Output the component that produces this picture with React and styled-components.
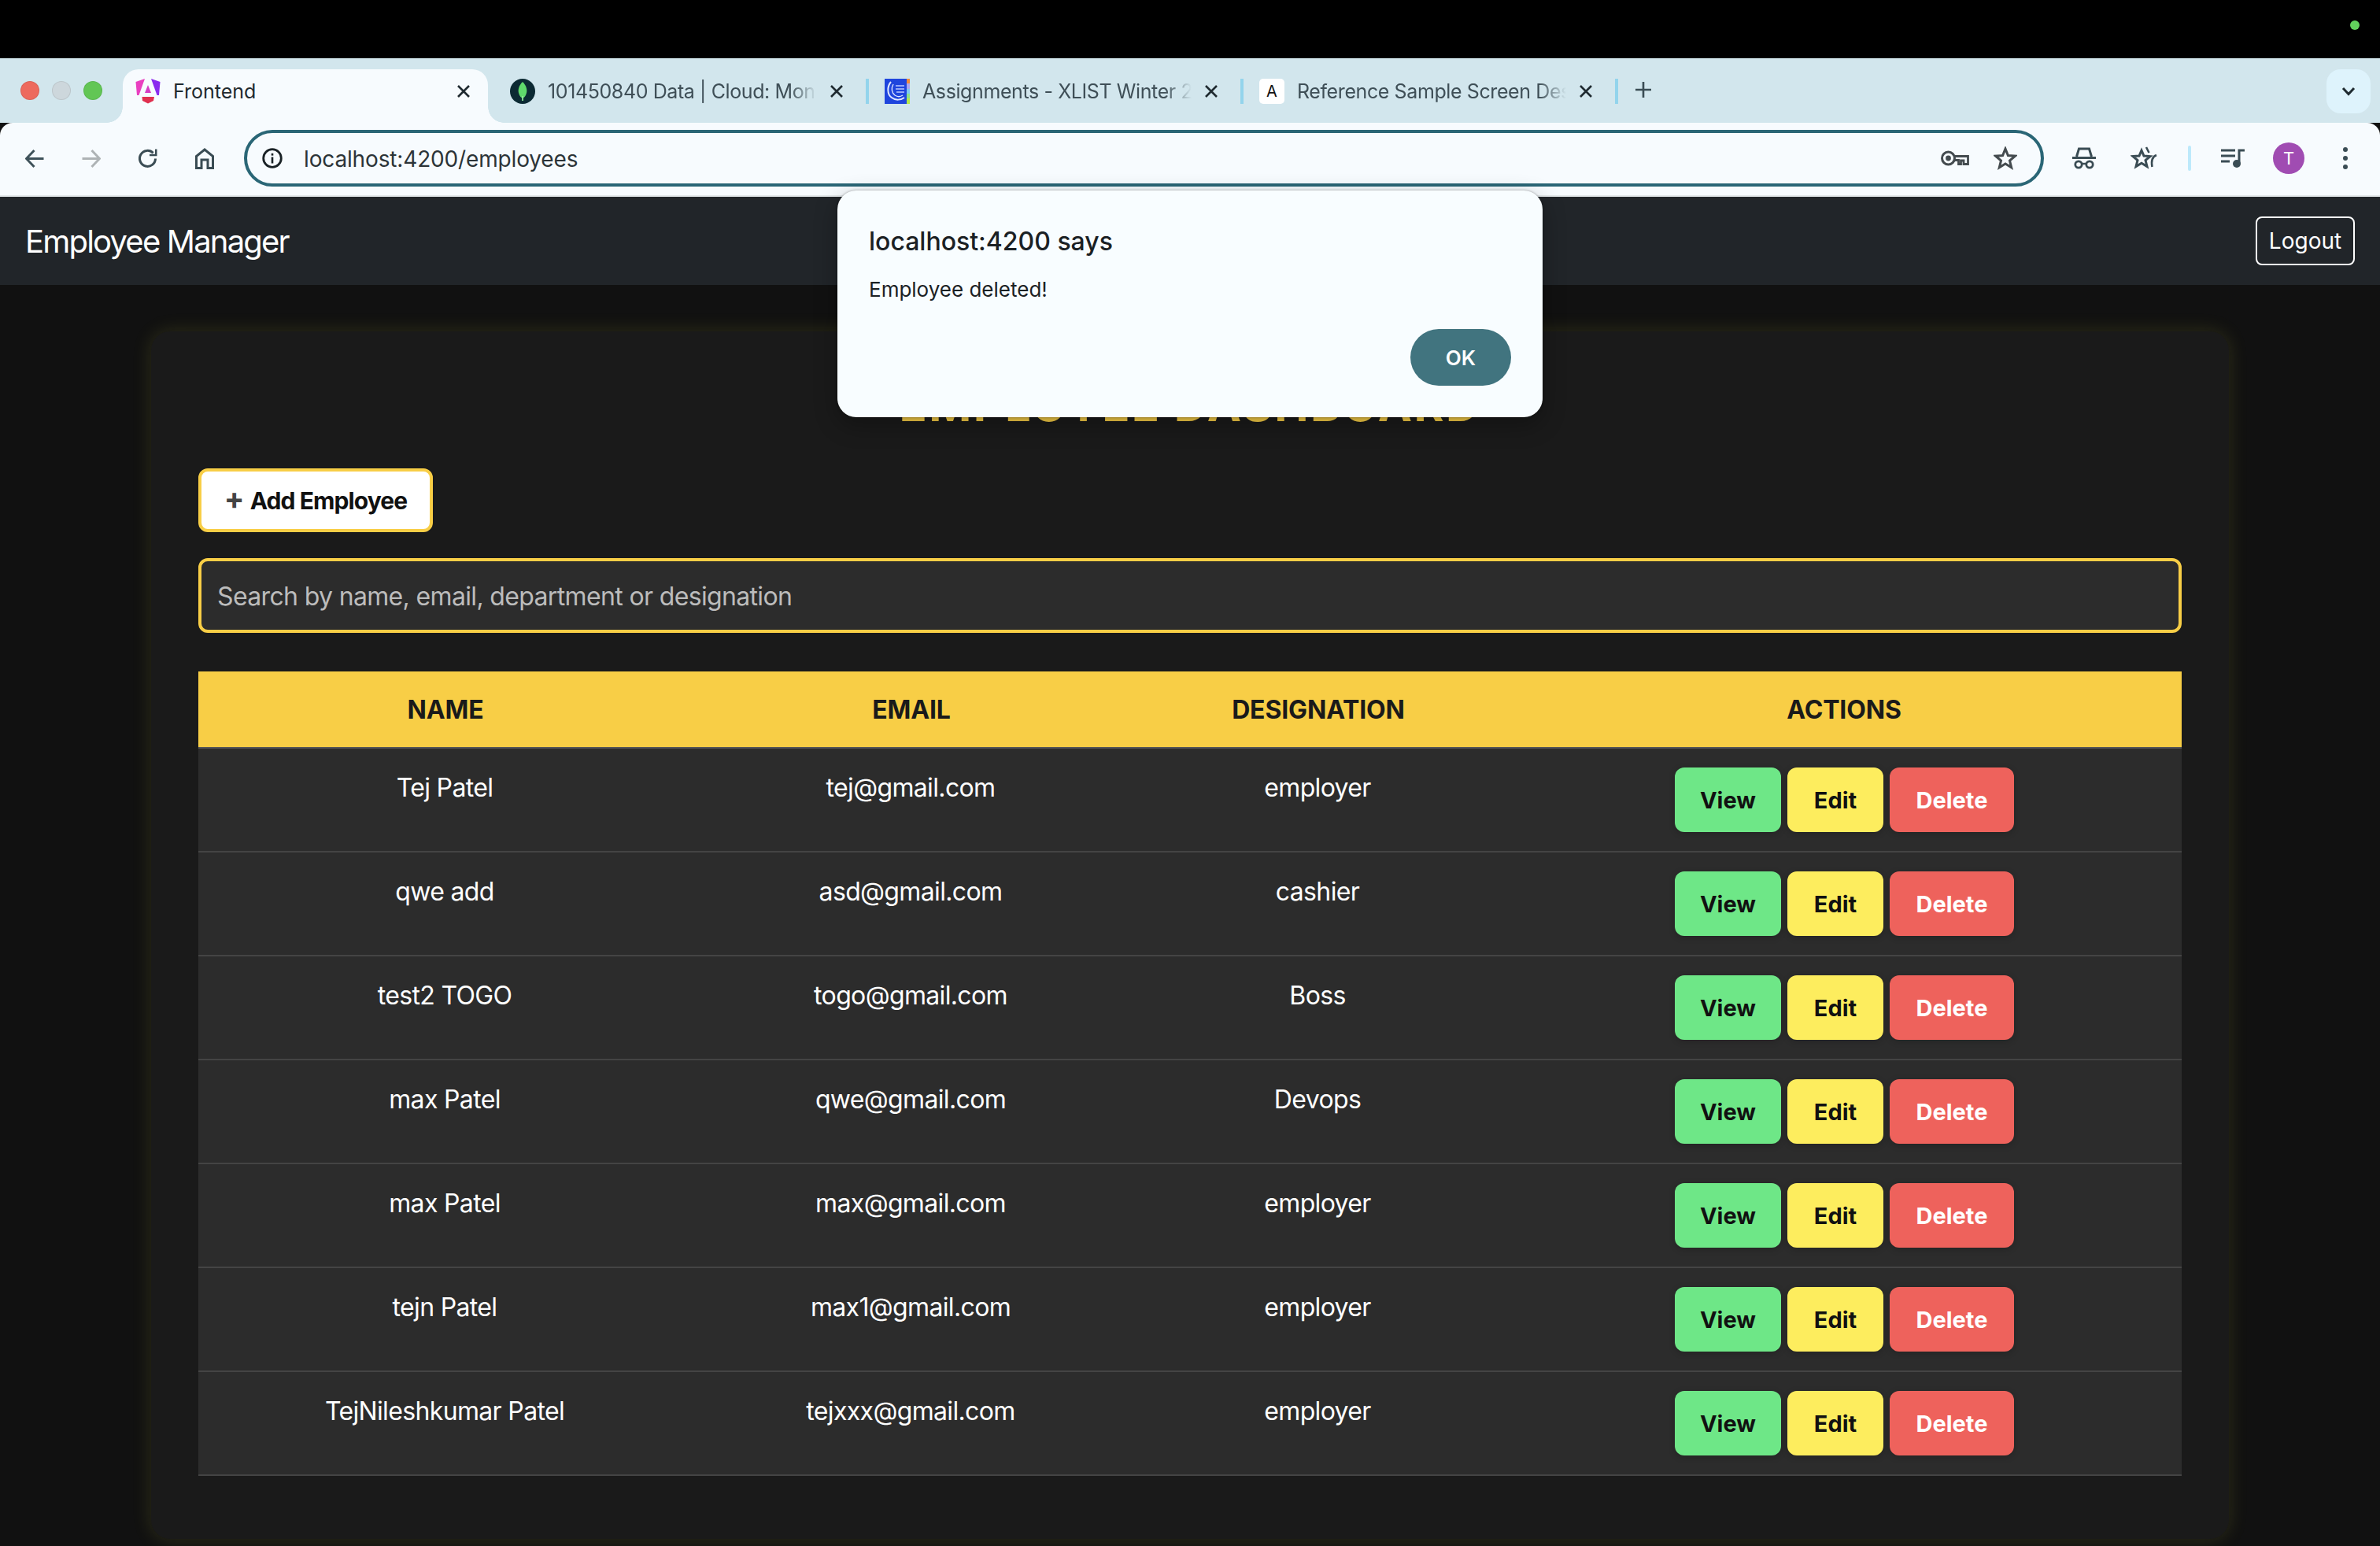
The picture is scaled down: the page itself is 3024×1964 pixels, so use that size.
import React from "react";
import styled, { createGlobalStyle } from "styled-components";

const GlobalStyle = createGlobalStyle`
  html, body {
    margin: 0;
    padding: 0;
    background: #111111;
    font-family: Inter, "Liberation Sans", sans-serif;
  }
  * { box-sizing: border-box; }
`;

const employees = [
  ["Tej Patel", "tej@gmail.com", "employer"],
  ["qwe add", "asd@gmail.com", "cashier"],
  ["test2 TOGO", "togo@gmail.com", "Boss"],
  ["max Patel", "qwe@gmail.com", "Devops"],
  ["max Patel", "max@gmail.com", "employer"],
  ["tejn Patel", "max1@gmail.com", "employer"],
  ["TejNileshkumar Patel", "tejxxx@gmail.com", "employer"],
];

const CloseIcon = () => (
  <CloseSvg viewBox="0 0 18 18">
    <path d="M2 2 L16 16 M16 2 L2 16" stroke="#1f2a30" strokeWidth="2.6" fill="none" />
  </CloseSvg>
);

const AngularIcon = () => (
  <Favicon viewBox="0 0 32 32">
    <path d="M12 0 L0.5 4 L2 21 L4.5 21 Z" fill="#e93fc0" />
    <path d="M20 0 L31.5 4 L30 21 L27.5 21 Z" fill="#8a2bee" />
    <path d="M16 8 L20 18 L12 18 Z" fill="#d63cc4" />
    <path d="M8.5 23 H24 L23 28 L16 31.5 L9 28 Z" fill="#e0304f" />
  </Favicon>
);

const MongoIcon = () => (
  <Favicon viewBox="0 0 32 32">
    <circle cx="16" cy="16" r="16" fill="#0c2a33" />
    <path d="M16 4 C21 9 22 14 21 18 C20 22 18 24 16 25 C14 24 12 22 11 18 C10 14 11 9 16 4 Z" fill="#5fd86b" />
    <rect x="15.2" y="22" width="1.8" height="6" fill="#8fe79a" />
  </Favicon>
);

const CollegeIcon = () => (
  <Favicon viewBox="0 0 32 32">
    <rect width="28" height="32" fill="#1f45dd" />
    <rect x="28" width="4" height="6" fill="#f08a3c" />
    <rect x="28" y="6" width="4" height="7" fill="#a9a6ee" />
    <rect x="28" y="13" width="4" height="6" fill="#7cc8f0" />
    <rect x="28" y="19" width="4" height="6" fill="#8ae08a" />
    <rect x="28" y="25" width="4" height="7" fill="#b6e84a" />
    <path d="M8 4 C3 10 3 20 9 24 C14 28 21 27 25 24" stroke="#dfe6ff" strokeWidth="2" fill="none" />
    <path d="M11 7 C8 12 9 18 13 21 C16 23 20 23 23 21" stroke="#dfe6ff" strokeWidth="1.4" fill="none" />
    <path d="M14 9 H25 M14 13 H25 M15 17 H25" stroke="#bcc9ff" strokeWidth="1.6" fill="none" />
  </Favicon>
);

const BackIcon = () => (
  <NavSvg viewBox="0 0 24 24">
    <path d="M23.5 12 H2 M11.5 1.5 L1.5 12 L11.5 22.5" stroke="#3f525a" strokeWidth="3" fill="none" />
  </NavSvg>
);

const ForwardIcon = () => (
  <NavSvg viewBox="0 0 24 24">
    <path d="M0.5 12 H22 M12.5 1.5 L22.5 12 L12.5 22.5" stroke="#aeb3b5" strokeWidth="3" fill="none" />
  </NavSvg>
);

const ReloadIcon = () => (
  <NavSvg viewBox="0 0 24 24">
    <path d="M21.5 12 A10 10 0 1 1 18.6 4.8" stroke="#3a4c54" strokeWidth="3" fill="none" />
    <path d="M14 8.8 H23.5 V0 H21 V6.3 H14 Z" fill="#3a4c54" />
  </NavSvg>
);

const HomeIcon = () => (
  <NavSvg viewBox="0 0 24 27">
    <path d="M1.5 25.5 V10.5 L12 2 L22.5 10.5 V25.5 H16 V15 H8 V25.5 Z" stroke="#3a4c54" strokeWidth="3" fill="none" />
  </NavSvg>
);

const InfoIcon = () => (
  <InfoSvg viewBox="0 0 26 26">
    <circle cx="13" cy="13" r="11.3" stroke="#1a2226" strokeWidth="2.8" fill="none" />
    <rect x="11.7" y="11.5" width="2.6" height="8" fill="#1a2226" />
    <rect x="11.7" y="6.8" width="2.6" height="2.8" fill="#1a2226" />
  </InfoSvg>
);

const KeyIcon = () => (
  <KeySvg viewBox="0 0 36 20">
    <circle cx="9.5" cy="10" r="8" stroke="#444b4f" strokeWidth="3" fill="none" />
    <circle cx="9.5" cy="10" r="3.4" fill="#444b4f" />
    <path d="M17.5 7.5 H34.5 V17.5 H29 V13 H25.5 V17.5 H22.5 V12.5 H17.5" stroke="#444b4f" strokeWidth="2.8" fill="none" />
  </KeySvg>
);

const StarIcon = () => (
  <StarSvg viewBox="0 0 30 30">
    <path d="M15 3 L18.4 11.6 L27.4 12.2 L20.5 18 L22.7 26.8 L15 22 L7.3 26.8 L9.5 18 L2.6 12.2 L11.6 11.6 Z" stroke="#444b4f" strokeWidth="3" fill="none" />
  </StarSvg>
);

const HatIcon = () => (
  <HatSvg viewBox="0 0 30 28">
    <path d="M0 13.5 H30" stroke="#3a4c54" strokeWidth="3" />
    <path d="M5.5 12 L8.5 2 H21.5 L24.5 12" stroke="#3a4c54" strokeWidth="3" fill="none" />
    <circle cx="8" cy="22" r="4.2" stroke="#3a4c54" strokeWidth="2.8" fill="none" />
    <circle cx="22" cy="22" r="4.2" stroke="#3a4c54" strokeWidth="2.8" fill="none" />
    <path d="M12 21 H18" stroke="#3a4c54" strokeWidth="2.4" />
  </HatSvg>
);

const SparkStarIcon = () => (
  <SparkSvg viewBox="0 0 34 30">
    <path d="M14 5 L17 12 L25 12.6 L19 17.6 L21 25.5 L14 21.2 L7 25.5 L9 17.6 L3 12.6 L11 12 Z" stroke="#3a4c54" strokeWidth="3" fill="none" />
    <path d="M20 1 L23.5 8 M33 11 C28 13 26 18 27.5 26" stroke="#3a4c54" strokeWidth="2.6" fill="none" />
  </SparkSvg>
);

const MediaIcon = () => (
  <MediaSvg viewBox="0 0 30 24">
    <path d="M0 2 H18 M0 9 H18 M0 16 H11" stroke="#3a4c54" strokeWidth="3" />
    <path d="M23 19 V2 H30" stroke="#3a4c54" strokeWidth="3" fill="none" />
    <circle cx="20" cy="19" r="5" fill="#3a4c54" />
  </MediaSvg>
);

const App = () => {
  return (
    <>
      <GlobalStyle />
      <Page>
        <MenuBar>
          <StatusDot />
        </MenuBar>

        <TabStrip>
          <WindowButtons>
            <Light $color="#ed6a5e" />
            <Light $color="#cdd7dc" />
            <Light $color="#62c655" />
          </WindowButtons>
          <ActiveTab>
            <AngularIcon />
            <ActiveTitle>Frontend</ActiveTitle>
            <CloseIcon />
          </ActiveTab>
          <Tab>
            <MongoIcon />
            <TabTitle>101450840 Data | Cloud: Mon</TabTitle>
            <CloseIcon />
          </Tab>
          <Tab>
            <CollegeIcon />
            <TabTitle>Assignments - XLIST Winter 2</TabTitle>
            <CloseIcon />
          </Tab>
          <Tab>
            <LetterFavicon>A</LetterFavicon>
            <TabTitle>Reference Sample Screen Des</TabTitle>
            <CloseIcon />
          </Tab>
          <NewTab viewBox="0 0 20 20">
            <path d="M10 0 V20 M0 10 H20" stroke="#3a4c54" strokeWidth="2.6" />
          </NewTab>
          <TabSearch>
            <svg width="18" height="12" viewBox="0 0 18 12">
              <path d="M2 2 L9 9.5 L16 2" stroke="#1f2a30" strokeWidth="3" fill="none" />
            </svg>
          </TabSearch>
        </TabStrip>

        <Toolbar>
          <NavSlot><BackIcon /></NavSlot>
          <NavSlot><ForwardIcon /></NavSlot>
          <NavSlot><ReloadIcon /></NavSlot>
          <NavSlot><HomeIcon /></NavSlot>
          <AddressBar>
            <InfoIcon />
            <Url>localhost:4200/employees</Url>
            <KeyIcon />
            <StarIcon />
          </AddressBar>
          <ToolSlot $width={76}><HatIcon /></ToolSlot>
          <ToolSlot $width={76}><SparkStarIcon /></ToolSlot>
          <ToolSlot $width={40}><ToolDivider /></ToolSlot>
          <ToolSlot $width={70}><MediaIcon /></ToolSlot>
          <ToolSlot $width={72}><Avatar>T</Avatar></ToolSlot>
          <ToolSlot $width={72}>
            <Kebab>
              <i /><i /><i />
            </Kebab>
          </ToolSlot>
        </Toolbar>

        <Navbar>
          <Brand>Employee Manager</Brand>
          <LogoutButton>Logout</LogoutButton>
        </Navbar>

        <Main>
          <Card>
            <Heading>EMPLOYEE DASHBOARD</Heading>
            <AddButton>
              <PlusSign>+</PlusSign>
              Add Employee
            </AddButton>
            <SearchInput placeholder="Search by name, email, department or designation" />
            <Table>
              <colgroup>
                <col style={{ width: "626px" }} />
                <col style={{ width: "558px" }} />
                <col style={{ width: "476px" }} />
                <col style={{ width: "860px" }} />
              </colgroup>
              <thead>
                <tr>
                  <HeadCell>NAME</HeadCell>
                  <HeadCell>EMAIL</HeadCell>
                  <HeadCell>DESIGNATION</HeadCell>
                  <HeadCell>ACTIONS</HeadCell>
                </tr>
              </thead>
              <tbody>
                {employees.map(([name, email, role], i) => (
                  <tr key={i}>
                    <Cell>{name}</Cell>
                    <Cell>{email}</Cell>
                    <Cell>{role}</Cell>
                    <Cell>
                      <Actions>
                        <ActionButton $bg="#6ee787" $width={135}>View</ActionButton>
                        <ActionButton $bg="#fded5e" $width={122}>Edit</ActionButton>
                        <ActionButton $bg="#ee625c" $fg="#ffffff" $width={158}>Delete</ActionButton>
                      </Actions>
                    </Cell>
                  </tr>
                ))}
              </tbody>
            </Table>
          </Card>
        </Main>

        <Dialog>
          <DialogTitle>localhost:4200 says</DialogTitle>
          <DialogMessage>Employee deleted!</DialogMessage>
          <DialogFooter>
            <OkButton>OK</OkButton>
          </DialogFooter>
        </Dialog>
      </Page>
    </>
  );
};

export default App;

const Page = styled.div`
  position: relative;
  width: 3024px;
  height: 1964px;
  overflow: hidden;
  background: #111111;
`;

const MenuBar = styled.div`
  height: 74px;
  background: #000000;
  display: flex;
  justify-content: flex-end;
  padding: 26px 26px 0 0;
`;

const StatusDot = styled.div`
  width: 12px;
  height: 12px;
  border-radius: 50%;
  background: #62d25c;
`;

const TabStrip = styled.div`
  height: 82px;
  background: #d2e6ed;
  display: flex;
  align-items: flex-start;
  padding-top: 14px;
`;

const WindowButtons = styled.div`
  width: 156px;
  height: 54px;
  padding-left: 26px;
  display: flex;
  align-items: center;
  gap: 16px;
`;

const Light = styled.div`
  width: 24px;
  height: 24px;
  border-radius: 50%;
  background: ${(p) => p.$color};
  border: 1px solid rgba(0, 0, 0, 0.08);
`;

const ActiveTab = styled.div`
  position: relative;
  width: 464px;
  height: 68px;
  margin-right: 8px;
  padding: 12px 22px 24px 16px;
  display: flex;
  background: #f7fbfe;
  border-radius: 20px 20px 0 0;

  &::before,
  &::after {
    content: "";
    position: absolute;
    bottom: 0;
    width: 20px;
    height: 20px;
  }
  &::before {
    left: -20px;
    background: radial-gradient(circle at 0 0, transparent 19.5px, #f7fbfe 20px);
  }
  &::after {
    right: -20px;
    background: radial-gradient(circle at 100% 0, transparent 19.5px, #f7fbfe 20px);
  }
`;

const Tab = styled.div`
  width: 476px;
  height: 32px;
  margin-top: 12px;
  padding: 0 28px 0 20px;
  display: flex;
  border-right: 4px solid #93d4ec;
`;

const Favicon = styled.svg`
  width: 32px;
  height: 32px;
  flex: none;
`;

const LetterFavicon = styled.div`
  width: 32px;
  height: 32px;
  flex: none;
  background: #ffffff;
  border-radius: 5px;
  color: #111111;
  font-size: 20px;
  line-height: 32px;
  text-align: center;
`;

const ActiveTitle = styled.div`
  flex: 1;
  margin-left: 16px;
  font-size: 25px;
  line-height: 32px;
  color: #1f2a30;
  white-space: nowrap;
`;

const TabTitle = styled.div`
  flex: 1;
  min-width: 0;
  margin: 0 16px 0 16px;
  font-size: 25px;
  line-height: 32px;
  letter-spacing: -0.4px;
  color: #3f4f57;
  white-space: nowrap;
  mask-image: linear-gradient(to right, #000 90%, transparent 100%);
`;

const CloseSvg = styled.svg`
  width: 18px;
  height: 18px;
  flex: none;
  align-self: center;
`;

const NewTab = styled.svg`
  width: 20px;
  height: 20px;
  margin: 16px 0 0 22px;
`;

const TabSearch = styled.div`
  margin-left: auto;
  margin-right: 12px;
  width: 56px;
  height: 56px;
  border-radius: 18px;
  background: #def3fc;
  display: flex;
  align-items: center;
  justify-content: center;
`;

const Toolbar = styled.div`
  position: relative;
  height: 94px;
  padding: 10px 8px 12px 8px;
  background: #f7fbfe;
  border-bottom: 2px solid #e3e8ea;
  border-radius: 16px 16px 0 0;
  display: flex;
  align-items: center;
`;

const NavSlot = styled.div`
  width: 72px;
  height: 72px;
  flex: none;
  display: flex;
  align-items: center;
  justify-content: center;
`;

const NavSvg = styled.svg`
  width: 24px;
  height: 27px;
`;

const ToolSlot = styled.div`
  width: ${(p) => p.$width}px;
  height: 72px;
  flex: none;
  display: flex;
  align-items: center;
  justify-content: center;
`;

const AddressBar = styled.div`
  flex: 1;
  height: 72px;
  margin: 0 13px 0 14px;
  padding: 0 30px 0 19px;
  border: 4px solid #2a6676;
  border-radius: 36px;
  display: flex;
  align-items: center;
`;

const InfoSvg = styled.svg`
  width: 26px;
  height: 26px;
  flex: none;
`;

const Url = styled.div`
  flex: 1;
  margin-left: 27px;
  padding-top: 2px;
  font-size: 28px;
  letter-spacing: -0.15px;
  color: #2c3438;
  white-space: nowrap;
`;

const KeySvg = styled.svg`
  width: 36px;
  height: 20px;
  flex: none;
`;

const StarSvg = styled.svg`
  width: 30px;
  height: 30px;
  margin-left: 31px;
  flex: none;
`;

const HatSvg = styled.svg`
  width: 30px;
  height: 28px;
`;

const SparkSvg = styled.svg`
  width: 34px;
  height: 30px;
`;

const ToolDivider = styled.div`
  width: 4px;
  height: 32px;
  border-radius: 2px;
  background: #bde9fb;
`;

const MediaSvg = styled.svg`
  width: 30px;
  height: 24px;
`;

const Avatar = styled.div`
  width: 40px;
  height: 40px;
  border-radius: 50%;
  background: #a04cb2;
  color: #ffffff;
  font-size: 22px;
  line-height: 40px;
  text-align: center;
`;

const Kebab = styled.div`
  display: flex;
  flex-direction: column;
  gap: 5px;

  i {
    display: block;
    width: 6px;
    height: 6px;
    border-radius: 50%;
    background: #3a4c54;
  }
`;

const Navbar = styled.div`
  height: 112px;
  padding: 0 32px;
  background: #212529;
  display: flex;
  align-items: center;
  justify-content: space-between;
`;

const Brand = styled.div`
  font-size: 40px;
  color: #ffffff;
  letter-spacing: -1.8px;
`;

const LogoutButton = styled.button`
  width: 126px;
  height: 62px;
  padding: 0;
  background: transparent;
  border: 2px solid #ffffff;
  border-radius: 8px;
  color: #ffffff;
  font-family: inherit;
  font-size: 28px;
`;

const Main = styled.div`
  padding: 59px 192px 0;
`;

const Card = styled.div`
  height: 1534px;
  padding: 57px 60px 0;
  background: #1a1a1a;
  border-radius: 24px;
  box-shadow: 0 0 24px rgba(200, 200, 60, 0.16);
`;

const Heading = styled.h1`
  margin: 0 0 45px;
  font-size: 58px;
  line-height: 72px;
  font-weight: 700;
  letter-spacing: 2.5px;
  text-align: center;
  color: #f8ce46;
`;

const AddButton = styled.button`
  display: block;
  width: 298px;
  height: 81px;
  padding: 0 0 3px;
  background: #ffffff;
  border: 4px solid #f8ce46;
  border-radius: 12px;
  color: #111111;
  font-family: inherit;
  font-size: 30px;
  font-weight: 700;
  letter-spacing: -0.9px;
`;

const PlusSign = styled.span`
  margin-right: 8px;
  font-size: 38px;
  line-height: 1;
  font-weight: 700;
  color: #444444;
`;

const SearchInput = styled.input`
  display: block;
  width: 100%;
  height: 95px;
  margin: 33px 0 49px;
  padding: 2px 20px 0;
  background: #2c2c2c;
  border: 4px solid #f8ce46;
  border-radius: 12px;
  color: #ffffff;
  font-family: inherit;
  font-size: 32px;
  letter-spacing: -0.65px;
  outline: none;

  &::placeholder {
    color: #bcbcbc;
    opacity: 1;
  }
`;

const Table = styled.table`
  width: 100%;
  table-layout: fixed;
  border-collapse: separate;
  border-spacing: 0;
`;

const HeadCell = styled.th`
  height: 98px;
  padding: 0 0 0 2px;
  background: #f8ce46;
  border-bottom: 2px solid #555555;
  color: #1a1a1a;
  font-size: 32px;
  font-weight: 700;
  letter-spacing: -0.15px;
  text-align: center;
`;

const Cell = styled.td`
  padding: 24px;
  background: #2c2c2c;
  border-bottom: 2px solid #444444;
  color: #ffffff;
  font-size: 32px;
  line-height: 52px;
  letter-spacing: -0.65px;
  text-align: center;
  vertical-align: top;
`;

const Actions = styled.div`
  display: flex;
  justify-content: center;
  gap: 8px;
  padding-left: 3px;
`;

const ActionButton = styled.button`
  width: ${(p) => p.$width}px;
  height: 82px;
  padding: 0;
  background: ${(p) => p.$bg};
  border: none;
  border-radius: 12px;
  box-shadow: 0 2px 8px rgba(0, 0, 0, 0.2);
  color: ${(p) => p.$fg || "#111111"};
  font-family: inherit;
  font-size: 29px;
  font-weight: 700;
  letter-spacing: 0;
`;

const Dialog = styled.div`
  position: absolute;
  top: 242px;
  left: 1064px;
  width: 896px;
  height: 288px;
  padding: 45px 40px 0;
  background: #f8fdff;
  border-radius: 24px;
  box-shadow: 0 0 3px rgba(0, 0, 0, 0.35), 0 10px 30px rgba(0, 0, 0, 0.3);
`;

const DialogTitle = styled.div`
  font-size: 32px;
  font-weight: 500;
  line-height: 40px;
  color: #1b2124;
`;

const DialogMessage = styled.div`
  margin-top: 23px;
  font-size: 26px;
  line-height: 36px;
  color: #1b2124;
`;

const DialogFooter = styled.div`
  position: absolute;
  right: 40px;
  bottom: 40px;
`;

const OkButton = styled.button`
  width: 128px;
  height: 72px;
  padding: 0;
  background: #41747f;
  border: none;
  border-radius: 36px;
  color: #ffffff;
  font-family: inherit;
  font-size: 26px;
  font-weight: 600;
`;
